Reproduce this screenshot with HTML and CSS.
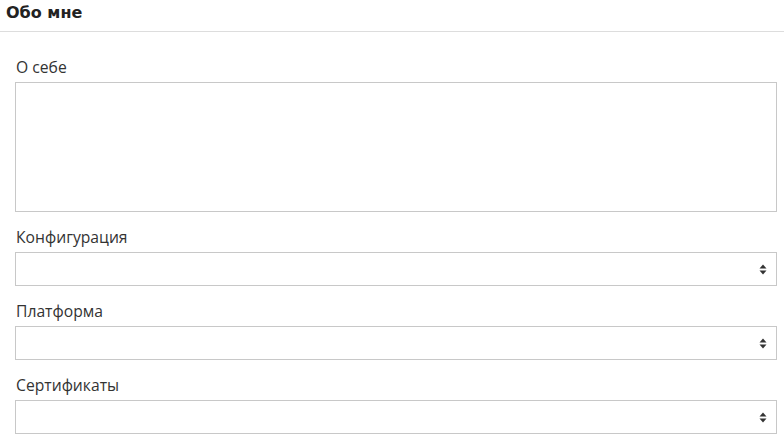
FILE: index.html
```html
<!DOCTYPE html>
<html lang="ru">
<head>
<meta charset="utf-8">
<title>Обо мне</title>
<link rel="stylesheet" href="styles.css">
</head>
<body>
<div class="panel">
  <h2 class="panel-title">Обо мне</h2>
  <form class="form">
    <div class="field">
      <label class="label">О себе</label>
      <div class="textarea"></div>
    </div>
    <div class="field">
      <label class="label">Конфигурация</label>
      <div class="select"><svg class="arrows" width="8" height="11" viewBox="0 0 8 11"><path d="M4 0.5 L7.5 4.5 L0.5 4.5 Z M0.5 6.5 L7.5 6.5 L4 10.5 Z" fill="#333"/></svg></div>
    </div>
    <div class="field">
      <label class="label">Платформа</label>
      <div class="select"><svg class="arrows" width="8" height="11" viewBox="0 0 8 11"><path d="M4 0.5 L7.5 4.5 L0.5 4.5 Z M0.5 6.5 L7.5 6.5 L4 10.5 Z" fill="#333"/></svg></div>
    </div>
    <div class="field">
      <label class="label">Сертификаты</label>
      <div class="select"><svg class="arrows" width="8" height="11" viewBox="0 0 8 11"><path d="M4 0.5 L7.5 4.5 L0.5 4.5 Z M0.5 6.5 L7.5 6.5 L4 10.5 Z" fill="#333"/></svg></div>
    </div>
  </form>
</div>
</body>
</html>
```
FILE: styles.css
```css
html, body {
  margin: 0;
  padding: 0;
  background: #fff;
}
body {
  font-family: "Open Sans", "DejaVu Sans", sans-serif;
  color: #333;
  width: 784px;
  height: 440px;
  overflow: hidden;
}
.panel-title {
  margin: 0;
  height: 32px;
  box-sizing: border-box;
  padding: 3px 6px 0;
  font-family: "DejaVu Sans", sans-serif;
  font-size: 16px;
  font-weight: bold;
  line-height: 20px;
  color: #222;
  border-bottom: 1px solid #ddd;
}
.form {
  padding: 25px 7px 0 15px;
}
.field {
  margin-bottom: 15px;
}
.label {
  display: block;
  padding-left: 1px;
  font-size: 15.7px;
  line-height: 20px;
  margin-bottom: 5px;
}
.textarea {
  height: 130px;
  box-sizing: border-box;
  border: 1px solid #c8c8c8;
}
.select {
  height: 34px;
  box-sizing: border-box;
  border: 1px solid #c8c8c8;
  display: flex;
  align-items: center;
  justify-content: flex-end;
  padding-right: 9px;
}
.arrows {
  display: block;
}
```
